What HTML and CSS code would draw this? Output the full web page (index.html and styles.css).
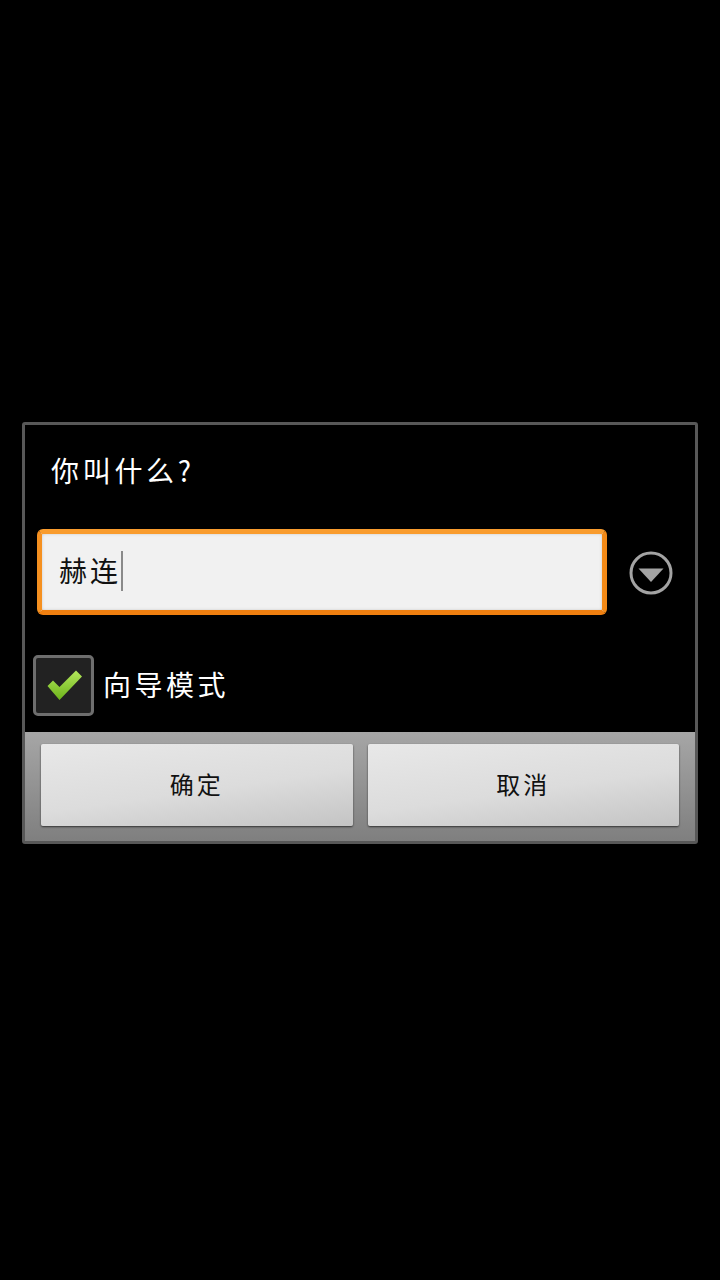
FILE: index.html
```html
<!DOCTYPE html>
<html lang="zh-CN">
<head>
<meta charset="utf-8">
<title>你叫什么?</title>
<link rel="stylesheet" href="styles.css">
</head>
<body>
<div class="dialog">
  <div class="title">你叫什么?</div>
  <div class="input-row">
    <div class="input"><span class="value">赫连</span><span class="caret"></span></div>
    <svg class="drop" width="44" height="44" viewBox="0 0 44 44"><circle cx="22" cy="22" r="20" fill="none" stroke="#a3a3a3" stroke-width="3"/><path d="M9.500 17.500H34.500L22 31Z" fill="#a3a3a3"/></svg>
  </div>
  <div class="check-row">
    <div class="check">
      <svg class="tick" width="40" height="34" viewBox="0 0 40 34"><defs><linearGradient id="g" x1="0" y1="0" x2="0" y2="1"><stop offset="0" stop-color="#b4e85c"/><stop offset="1" stop-color="#6cb31a"/></linearGradient></defs><path d="M2.500 18L8 12.500L14.500 19L31 2.500L37 8.500L14.500 32Z" fill="url(#g)"/></svg>
    </div>
    <span class="check-label">向导模式</span>
  </div>
  <div class="bar">
    <div class="btn">确定</div>
    <div class="btn">取消</div>
  </div>
</div>
</body>
</html>
```
FILE: styles.css
```css
html, body { margin: 0; padding: 0; background: #000; }
body { height: 1280px; overflow: hidden; padding-top: 422px; box-sizing: border-box; font-family: "Noto Sans CJK SC", "Noto Sans", sans-serif; }
.dialog { margin: 0 22px; height: 422px; box-sizing: border-box; border: 3px solid #585858; border-radius: 3px; background: #000; display: flex; flex-direction: column; }
.title { height: 104px; box-sizing: border-box; padding: 24px 0 0 26px; color: #fff; font-size: 28px; line-height: 42px; letter-spacing: 3.700px; }
.input-row { display: flex; align-items: center; height: 86px; padding-left: 12px; }
.input { width: 570px; height: 86px; box-sizing: border-box; border: 5px solid; border-color: #f99c2e #f28a18 #ef7f10 #f59020; border-radius: 6px; background: #f1f1f1; box-shadow: inset 0 0 3px #c8c8c8; display: flex; align-items: center; padding-left: 17px; }
.value { color: #111; font-size: 28px; letter-spacing: 3px; line-height: 40px; position: relative; top: -2px; }
.caret { width: 2px; height: 40px; background: #8a8a8a; margin: 0 0 3px 0; }
.drop { margin-left: 22px; margin-top: 2px; }
.check-row { display: flex; align-items: center; margin-top: 39px; padding-left: 8px; height: 62px; }
.check { width: 61px; height: 61px; box-sizing: border-box; border: 3px solid #6e6e6e; border-radius: 5px; background: #222; display: flex; align-items: center; justify-content: center; }
.tick { margin: 0 0 1px 2px; flex: none; }
.check-label { color: #fff; font-size: 28px; letter-spacing: 3.500px; margin: 0 0 3px 9px; line-height: 40px; }
.bar { flex: 1; margin-top: 16px; display: flex; gap: 15px; padding: 12px 16px 15px 16px; background: linear-gradient(#a6a6a6, #7f7f7f); }
.btn { flex: 1; display: flex; align-items: center; justify-content: center; padding-bottom: 4px; box-sizing: border-box; background: linear-gradient(172deg, #e8e8e8, #dcdcdc 55%, #c4c4c4); border-radius: 2px; box-shadow: 0 1px 2px #333; color: #111; font-size: 24px; letter-spacing: 3px; }
```
